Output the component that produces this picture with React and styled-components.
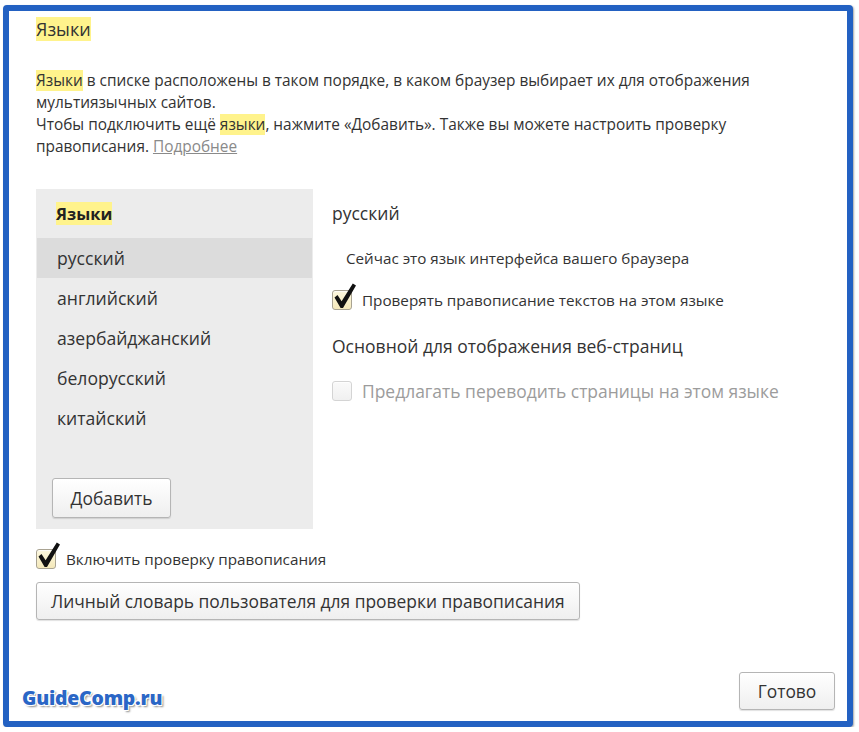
import React from "react";
import styled, { createGlobalStyle } from "styled-components";

const GlobalStyle = createGlobalStyle`
  html, body {
    margin: 0;
    padding: 0;
    background: #ffffff;
  }
  body {
    font-family: "Open Sans", "Noto Sans", sans-serif;
    color: #333;
  }
`;

const Frame = styled.div`
  box-sizing: border-box;
  width: 850px;
  height: 722px;
  margin: 5px 0 0 3px;
  border: 6px solid #2361c2;
  border-radius: 4px;
  box-shadow: 1px 1px 2px rgba(0, 0, 0, 0.35);
  background: #fff;
  padding: 5px 12px 11px 13px;
  display: flex;
  flex-direction: column;
`;

const Main = styled.div`
  padding-left: 14px;
`;

const Mark = styled.span`
  background: #fff38c;
`;

const Title = styled.div`
  font-size: 18px;
  line-height: 27px;
  color: #333;
`;

const Intro = styled.p`
  margin: 27px 0 0;
  font-size: 15.4px;
  line-height: 22px;
  color: #333;
`;

const MoreLink = styled.a`
  color: #8a8a8a;
  text-decoration: underline;
`;

const Editor = styled.div`
  display: flex;
  margin-top: 31px;
  height: 340px;
`;

const LangList = styled.div`
  width: 277px;
  background: #ececec;
  display: flex;
  flex-direction: column;
  padding-top: 12px;
  box-sizing: border-box;
`;

const ListHeader = styled.div`
  padding: 0 20px;
  font-size: 16.5px;
  font-weight: 700;
  line-height: 25px;
  margin-bottom: 12px;
  color: #222;
`;

const LangRow = styled.div`
  height: 40px;
  line-height: 40px;
  padding-left: 20px;
  margin-left: 1px;
  margin-right: 1px;
  font-size: 17.6px;
  color: #333;
  background: ${(p) => (p.$active ? "#dcdcdc" : "transparent")};
`;

const Button = styled.button`
  font-family: "Open Sans", "Noto Sans", sans-serif;
  font-size: ${(p) => p.$size || "17.4px"};
  color: #333;
  height: ${(p) => p.$h || "38px"};
  padding: 0 ${(p) => p.$px || "14px"};
  background: linear-gradient(#ffffff, #efefef);
  border: 1px solid #b5b5b5;
  border-radius: 3px;
  box-shadow: 0 1px 1px rgba(0, 0, 0, 0.12);
  cursor: pointer;
`;

const AddButton = styled(Button)`
  align-self: flex-start;
  margin: 40px 0 0 16px;
  width: 119px;
`;

const DoneButton = styled(Button)`
  width: 96px;
`;

const Details = styled.div`
  flex: 1;
  padding: 12px 0 0 19px;
  display: flex;
  flex-direction: column;
  align-items: flex-start;
`;

const LangTitle = styled.div`
  font-size: 17.5px;
  line-height: 25px;
  color: #333;
`;

const Note = styled.div`
  margin-top: 20px;
  padding-left: 14px;
  font-size: 15.2px;
  line-height: 24px;
  color: #333;
`;

const CheckRow = styled.label`
  display: flex;
  align-items: center;
  gap: 10px;
  margin-top: ${(p) => p.$mt || "0"};
  font-size: ${(p) => p.$size || "15.25px"};
  line-height: 24px;
  color: ${(p) => (p.$disabled ? "#9c9c9c" : "#333")};
`;

const Box = styled.span`
  position: relative;
  flex: none;
  width: 18px;
  height: 18px;
  border-radius: 3px;
  border: 1px solid ${(p) => (p.$disabled ? "#d4d4d4" : "#a9a392")};
  background: ${(p) =>
    p.$disabled
      ? "linear-gradient(#fafafa, #f0f0f0)"
      : "linear-gradient(#fdf8de, #f4e8ba)"};
  box-shadow: inset 0 1px 1px rgba(255, 255, 255, 0.8);
`;

const Tick = styled.svg`
  position: absolute;
  left: 0;
  top: -8px;
  overflow: visible;
`;

const SectionHeading = styled.div`
  margin-top: 22px;
  font-size: 17.5px;
  line-height: 25px;
  color: #333;
`;

const Bottom = styled.div`
  display: flex;
  flex-direction: column;
  align-items: flex-start;
  margin-top: 18px;
`;

const DictButton = styled(Button)`
  margin-top: 11px;
`;

const Footer = styled.div`
  margin-top: auto;
  display: flex;
  justify-content: space-between;
  align-items: flex-end;
`;

const Logo = styled.div`
  font-family: "Open Sans", "Noto Sans", sans-serif;
  font-weight: 800;
  font-size: 19.4px;
  line-height: 24px;
  color: #2a66c6;
  letter-spacing: -0.2px;
  text-shadow: -1px -1px 0 #fff, 1px -1px 0 #fff, -1px 1px 0 #fff,
    1px 1px 0 #fff, 2px 2px 2px rgba(0, 0, 0, 0.45);
`;

const Checkbox = ({ checked, disabled }) => (
  <Box $disabled={disabled}>
    {checked && (
      <Tick width="24" height="26" viewBox="0 0 24 26">
        <path
          d="M1.5 14.5 L4.5 12 L8.6 18.2 L19.8 0.5 L23 2.6 L10 25 L7.6 25 Z"
          fill="#111"
        />
      </Tick>
    )}
  </Box>
);

const languages = ["русский", "английский", "азербайджанский", "белорусский", "китайский"];

export default function App() {
  return (
    <>
      <GlobalStyle />
      <Frame>
        <Main>
          <Title>
            <Mark>Языки</Mark>
          </Title>
          <Intro>
            <Mark>Языки</Mark> в списке расположены в таком порядке, в каком браузер выбирает их для отображения
            <br />
            мультиязычных сайтов.
            <br />
            Чтобы подключить ещё <Mark>языки</Mark>, нажмите «Добавить». Также вы можете настроить проверку
            <br />
            правописания. <MoreLink>Подробнее</MoreLink>
          </Intro>

          <Editor>
            <LangList>
              <ListHeader>
                <Mark>Языки</Mark>
              </ListHeader>
              {languages.map((lang, i) => (
                <LangRow key={lang} $active={i === 0}>
                  {lang}
                </LangRow>
              ))}
              <AddButton $h="40px">Добавить</AddButton>
            </LangList>

            <Details>
              <LangTitle>русский</LangTitle>
              <Note>Сейчас это язык интерфейса вашего браузера</Note>
              <CheckRow $mt="18px">
                <Checkbox checked />
                Проверять правописание текстов на этом языке
              </CheckRow>
              <SectionHeading>Основной для отображения веб-страниц</SectionHeading>
              <CheckRow $mt="20px" $size="17.45px" $disabled>
                <Checkbox disabled />
                Предлагать переводить страницы на этом языке
              </CheckRow>
            </Details>
          </Editor>

          <Bottom>
            <CheckRow>
              <Checkbox checked />
              Включить проверку правописания
            </CheckRow>
            <DictButton>Личный словарь пользователя для проверки правописания</DictButton>
          </Bottom>
        </Main>

        <Footer>
          <Logo>GuideComp.ru</Logo>
          <DoneButton $px="0">Готово</DoneButton>
        </Footer>
      </Frame>
    </>
  );
}
